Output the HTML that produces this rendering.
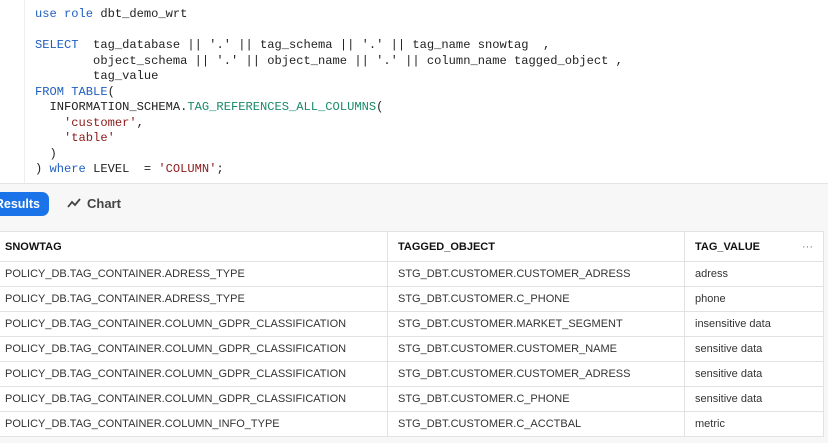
<!DOCTYPE html><html><head><style>
body{margin:0;width:828px;height:443px;overflow:hidden;background:#fff;font-family:"Liberation Sans",sans-serif;position:relative}
.ed{position:absolute;left:0;top:0;width:828px;height:183px;background:#fff}
.gut{position:absolute;left:24px;top:0;width:1px;height:183px;background:#eee}
pre{position:absolute;left:35px;top:7px;margin:0;font-family:"Liberation Mono",monospace;font-size:12.1px;line-height:15.5px;color:#222}
.k{color:#1f5fbf}.s{color:#8b1a1a}.f{color:#1a8a6a}
.bar{position:absolute;left:0;top:183px;width:828px;height:40px;background:#f7f7f7;border-top:1px solid #e4e4e4;border-bottom:1px solid #e4e4e4}
.btn{position:absolute;left:-10px;top:8px;width:59px;height:24px;background:#1a73e8;border-radius:7px;color:#fff;font-weight:bold;font-size:12.5px;line-height:24px;text-align:right;box-sizing:border-box;padding-right:9px}
.ch{position:absolute;left:67px;top:12px;font-size:13px;font-weight:bold;color:#444}
.ch span{margin-left:6px}
.bot{position:absolute;left:0;top:224px;width:828px;height:219px;background:#f7f7f7}
table{position:absolute;left:-1px;top:231px;border-collapse:collapse;background:#fff;font-size:11px;color:#333}
td{border:1px solid #e2e2e2;height:24px;padding:0 0 0 5px;white-space:nowrap}
td+td{padding-left:10px}
tr.h td{height:29px;font-weight:bold;color:#111;font-size:11px}
</style></head><body>
<div class="ed"><div class="gut"></div>
<pre><span class="k">use role</span> dbt_demo_wrt

<span class="k">SELECT</span>  tag_database || '.' || tag_schema || '.' || tag_name snowtag  ,
        object_schema || '.' || object_name || '.' || column_name tagged_object ,
        tag_value
<span class="k">FROM TABLE</span>(
  INFORMATION_SCHEMA.<span class="f">TAG_REFERENCES_ALL_COLUMNS</span>(
    <span class="s">'customer'</span>,
    <span class="s">'table'</span>
  )
) <span class="k">where</span> LEVEL  = <span class="s">'COLUMN'</span>;</pre></div>
<div class="bar"><div class="btn">Results</div>
<div class="ch"><svg width="14" height="10" viewBox="0 0 14 10"><path d="M1 9 L5 4 L8 7 L13 1" fill="none" stroke="#444" stroke-width="1.8"/></svg><span>Chart</span></div></div>
<div class="bot"></div>
<table>
<tr class="h"><td style="width:382px">SNOWTAG</td><td style="width:286px">TAGGED_OBJECT</td><td style="width:128px">TAG_VALUE <span style="float:right;margin-right:10px;color:#777;font-weight:normal">···</span></td></tr>
<tr><td>POLICY_DB.TAG_CONTAINER.ADRESS_TYPE</td><td>STG_DBT.CUSTOMER.CUSTOMER_ADRESS</td><td>adress</td></tr>
<tr><td>POLICY_DB.TAG_CONTAINER.ADRESS_TYPE</td><td>STG_DBT.CUSTOMER.C_PHONE</td><td>phone</td></tr>
<tr><td>POLICY_DB.TAG_CONTAINER.COLUMN_GDPR_CLASSIFICATION</td><td>STG_DBT.CUSTOMER.MARKET_SEGMENT</td><td>insensitive data</td></tr>
<tr><td>POLICY_DB.TAG_CONTAINER.COLUMN_GDPR_CLASSIFICATION</td><td>STG_DBT.CUSTOMER.CUSTOMER_NAME</td><td>sensitive data</td></tr>
<tr><td>POLICY_DB.TAG_CONTAINER.COLUMN_GDPR_CLASSIFICATION</td><td>STG_DBT.CUSTOMER.CUSTOMER_ADRESS</td><td>sensitive data</td></tr>
<tr><td>POLICY_DB.TAG_CONTAINER.COLUMN_GDPR_CLASSIFICATION</td><td>STG_DBT.CUSTOMER.C_PHONE</td><td>sensitive data</td></tr>
<tr><td>POLICY_DB.TAG_CONTAINER.COLUMN_INFO_TYPE</td><td>STG_DBT.CUSTOMER.C_ACCTBAL</td><td>metric</td></tr>
</table>
</body></html>
